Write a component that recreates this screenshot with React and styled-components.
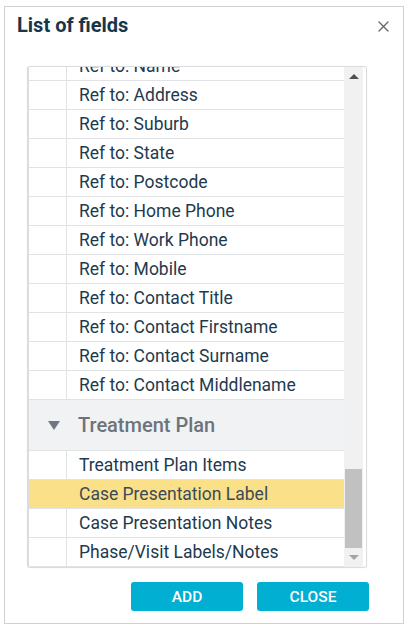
import React from 'react';
import styled, { createGlobalStyle, css } from 'styled-components';

const GlobalStyle = createGlobalStyle`
  html, body {
    margin: 0;
    padding: 0;
    background: #fff;
    font-family: Roboto, 'Liberation Sans', Arial, sans-serif;
  }
`;

const Page = styled.div`
  width: 411px;
  height: 626px;
  padding: 6px 8px 3px 4px;
  box-sizing: border-box;
`;

const Dialog = styled.div`
  width: 400px;
  height: 618px;
  box-sizing: border-box;
  border: 1px solid #cfd2d4;
  display: flex;
  flex-direction: column;
`;

const Header = styled.div`
  display: flex;
  align-items: center;
  justify-content: space-between;
  padding: 0 12px;
  height: 36px;
`;

const Title = styled.h2`
  margin: 0;
  font-size: 20px;
  font-weight: 700;
  color: #17364a;
`;

const CloseButton = styled.button`
  border: 0;
  background: none;
  padding: 0;
  width: 14px;
  height: 14px;
  display: flex;
  align-items: center;
  justify-content: center;
  margin-right: 1px;
  margin-top: 2px;
  cursor: pointer;
`;

const ListBox = styled.div`
  margin: 23px 0 0 22px;
  width: 340px;
  height: 502px;
  box-sizing: border-box;
  border: 1px solid #d9dde0;
  border-left-width: 2px;
  border-radius: 3px;
  box-shadow: 0 0 2px rgba(0, 0, 0, 0.06);
  display: flex;
  padding-right: 3px;
  overflow: hidden;
`;

const Viewport = styled.div`
  flex: 1;
  overflow: hidden;
  display: flex;
  flex-direction: column;
  justify-content: flex-end;
`;

const Row = styled.div`
  flex-shrink: 0;
  display: flex;
  height: 29px;
  box-sizing: border-box;
  border-bottom: 1px solid #e0e3e6;
  background: ${({ selected }) => (selected ? '#fbe08a' : '#fff')};
  font-size: 17.5px;
  color: ${({ selected }) => (selected ? '#3b4a58' : '#1e3a4e')};
`;

const Gutter = styled.div`
  width: 37px;
  flex-shrink: 0;
  border-right: 1px solid ${({ selected }) => (selected ? 'transparent' : '#e0e3e6')};
`;

const Label = styled.div`
  padding-left: 12px;
  display: flex;
  align-items: center;
  white-space: nowrap;
`;

const GroupRow = styled.div`
  flex-shrink: 0;
  height: 51px;
  box-sizing: border-box;
  display: flex;
  align-items: center;
  background: #f1f2f4;
  border-bottom: 1px solid #e0e3e6;
  padding-left: 19px;
  font-size: 20px;
  font-weight: 500;
  color: #6d737a;
`;

const Caret = styled.span`
  width: 0;
  height: 0;
  border-left: 6px solid transparent;
  border-right: 6px solid transparent;
  border-top: 9px solid #6f7780;
  margin-right: 18px;
  margin-top: 1px;
`;

const ScrollBar = styled.div`
  width: 19px;
  flex-shrink: 0;
  background: #f1f1f1;
  display: flex;
  flex-direction: column;
`;

const ArrowButton = styled.div`
  height: 19px;
  display: flex;
  align-items: center;
  justify-content: center;

  &::after {
    content: '';
    width: 0;
    height: 0;
    border-left: 5px solid transparent;
    border-right: 5px solid transparent;
    ${({ down }) =>
      down
        ? css`
            border-top: 5px solid #a3a3a3;
          `
        : css`
            border-bottom: 5px solid #505050;
          `}
  }
`;

const Track = styled.div`
  flex: 1;
  display: flex;
  flex-direction: column;
  justify-content: flex-end;
  padding: 0 1px;
`;

const Thumb = styled.div`
  height: 79px;
  background: #c1c1c1;
`;

const Footer = styled.div`
  display: flex;
  justify-content: flex-end;
  gap: 14px;
  padding: 14px 34px 0 0;
`;

const Button = styled.button`
  width: 112px;
  height: 29px;
  border: 0;
  border-radius: 3px;
  background: #00afd1;
  color: #fff;
  font-family: Roboto, 'Liberation Sans', Arial, sans-serif;
  font-size: 15.5px;
  font-weight: 500;
  text-transform: uppercase;
  cursor: pointer;
`;

const groups = [
  {
    name: 'Patient',
    fields: ['Title', 'Firstname', 'Surname', 'Preferred Name', 'Date of Birth', 'Address', 'Suburb', 'State', 'Postcode', 'Home Phone', 'Work Phone', 'Mobile', 'Email', 'Chart Number', 'Next Appointment', 'Last Visit', 'Balance'],
  },
  {
    name: 'Referrer',
    fields: [
      'Ref to: Title',
      'Ref to: Firstname',
      'Ref to: Surname',
      'Ref to: Practice',
      'Ref to: Name',
      'Ref to: Address',
      'Ref to: Suburb',
      'Ref to: State',
      'Ref to: Postcode',
      'Ref to: Home Phone',
      'Ref to: Work Phone',
      'Ref to: Mobile',
      'Ref to: Contact Title',
      'Ref to: Contact Firstname',
      'Ref to: Contact Surname',
      'Ref to: Contact Middlename',
    ],
  },
  {
    name: 'Treatment Plan',
    fields: ['Treatment Plan Items', 'Case Presentation Label', 'Case Presentation Notes', 'Phase/Visit Labels/Notes'],
  },
];

const selectedField = 'Case Presentation Label';

const CloseIcon = () => (
  <svg width="11" height="11" viewBox="0 0 11 11">
    <path d="M1 1 L10 10 M10 1 L1 10" stroke="#5a6670" strokeWidth="1.3" strokeLinecap="round" />
  </svg>
);

const App = () => (
  <>
    <GlobalStyle />
    <Page>
      <Dialog>
        <Header>
          <Title>List of fields</Title>
          <CloseButton aria-label="Close">
            <CloseIcon />
          </CloseButton>
        </Header>
        <ListBox>
          <Viewport>
            {groups.map((group) => (
              <React.Fragment key={group.name}>
                <GroupRow>
                  <Caret />
                  {group.name}
                </GroupRow>
                {group.fields.map((field) => {
                  const selected = field === selectedField;
                  return (
                    <Row key={field} selected={selected}>
                      <Gutter selected={selected} />
                      <Label>{field}</Label>
                    </Row>
                  );
                })}
              </React.Fragment>
            ))}
          </Viewport>
          <ScrollBar>
            <ArrowButton />
            <Track>
              <Thumb />
            </Track>
            <ArrowButton down />
          </ScrollBar>
        </ListBox>
        <Footer>
          <Button>Add</Button>
          <Button>Close</Button>
        </Footer>
      </Dialog>
    </Page>
  </>
);

export default App;
